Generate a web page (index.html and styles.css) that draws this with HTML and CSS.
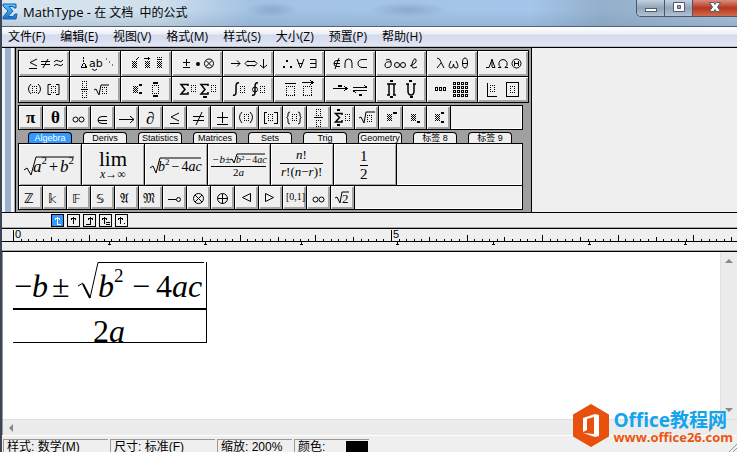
FILE: index.html
```html
<!DOCTYPE html>
<html lang="zh-CN">
<head>
<meta charset="utf-8">
<title>MathType</title>
<link rel="stylesheet" href="styles.css">
</head>
<body>
<svg class="defs" width="0" height="0" aria-hidden="true">
  <defs>
    <pattern id="check" width="2" height="2" patternUnits="userSpaceOnUse"><path d="M0 0h1v1h-1zM1 1h1v1h-1z" fill="#000"/></pattern>
    <g id="box"><path d="M0 .5h7M0 8.500h7M.5 2v6M6.500 2v6" stroke="#000" stroke-dasharray="1 1" fill="none"/></g>
    <g id="wide-box"><path d="M0 .5h9M0 9.500h9M.5 2v7M8.500 2v7" stroke="#000" stroke-dasharray="1 1" fill="none"/></g>
    <g id="mini"><path d="M0 .5h5M0 6.500h5M.5 2v4M4.500 2v4" stroke="#000" stroke-dasharray="1 1" fill="none"/></g>
    <rect id="fill" width="5" height="7" fill="url(#check)"/>
    <pattern id="ticks" x="13" width="378" height="12" patternUnits="userSpaceOnUse">
      <path fill="none" stroke="#000" d="M8.500 10v2M15.500 10v2M23.500 10v2M30.500 10v2M38.500 8v4M45.500 10v2M53.500 10v2M60.500 10v2M68.500 10v2M76.500 6v6M83.500 10v2M91.500 10v2M98.500 10v2M106.500 10v2M113.500 8v4M121.500 10v2M129.500 10v2M136.500 10v2M144.500 10v2M151.500 6v6M159.500 10v2M166.500 10v2M174.500 10v2M181.500 10v2M189.500 8v4M197.500 10v2M204.500 10v2M212.500 10v2M219.500 10v2M227.500 6v6M234.500 10v2M242.500 10v2M249.500 10v2M257.500 10v2M265.500 8v4M272.500 10v2M280.500 10v2M287.500 10v2M295.500 10v2M302.500 6v6M310.500 10v2M318.500 10v2M325.500 10v2M333.500 10v2M340.500 8v4M348.500 10v2M355.500 10v2M363.500 10v2M370.500 10v2M.5 1v11"/>
    </pattern>
    <pattern id="stops" x="108" width="96" height="4" patternUnits="userSpaceOnUse"><path d="M1 0h1v2h1v1h-3v-1h1z"/></pattern>
    <linearGradient id="sigma" x2="0" y2="1"><stop stop-color="#5cc4fa"/><stop offset="1" stop-color="#1573d2"/></linearGradient>
  </defs>
</svg>

<header class="titlebar">
  <svg class="app-icon" width="16" height="17" viewBox="0 0 16 17"><path d="M1 1h13v4h-2l-1-1.500H7l4 4.500-5 5.500h5l2-2.500h2l-1 5H1v-2l5-6-5-5z"/></svg>
  <h1 class="title"><span class="latin">MathType -</span> 在 文档&nbsp; 中的公式</h1>
  <div class="window-buttons">
    <button aria-label="最小化"><svg width="12" height="14"><rect x=".5" y="8.500" width="11" height="3"/></svg></button>
    <button aria-label="最大化"><svg width="12" height="14"><path d="M.5 2.500h11v9H.5zM4.500 5.500h3v3h-3z" fill-rule="evenodd"/></svg></button>
    <button class="close" aria-label="关闭"><svg width="12" height="14"><path d="M.5 2.500h4l1.500 2 1.500-2h4l-3 4.500 3 4.500h-4L6 9.500l-1.500 2h-4l3-4.500z"/></svg></button>
  </div>
</header>

<nav class="menubar">
  <button>文件(F)</button><button>编辑(E)</button><button>视图(V)</button><button>格式(M)</button><button>样式(S)</button><button>大小(Z)</button><button>预置(P)</button><button>帮助(H)</button>
</nav>

<section class="tools">
  <div class="grip"></div>
  <div class="palette">
    <div class="templates">
      <button><svg viewBox="0 0 50 25"><path d="M18 8l-7 3.500 7 3.500M10 17.500h8M22 10.500h9M22 13.500h9M29 8l-5 9M35 11q2-3 4.500-1t4.500-1M35 15q2-3 4.500-1t4.500-1"/></svg></button>
      <button><svg viewBox="0 0 50 25"><path class="crisp" d="M13.500 6v2M13.500 9v2M13.500 12l-2 4.500h5l-2-4.500"/><text x="19" y="16" class="sans small">ab</text><path d="M22 18q3 3 5 0M36 8h1M39 11h1M42 14h1"/></svg></button>
      <button><svg viewBox="0 0 50 25"><use href="#fill" x="11" y="10"/><use href="#fill" x="24" y="10"/><use href="#fill" x="36" y="10"/><path class="crisp" d="M15 9l3-3M23 7.500h6M27 6v3M36 6.500h1M38 6.500h1M40 6.500h1M36 8.500h5"/></svg></button>
      <button><svg viewBox="0 0 50 25"><path class="crisp" d="M14.500 8v7M11 11.500h7M11 16.500h7"/><circle class="solid" cx="26" cy="13" r="2"/><circle cx="37" cy="12.500" r="4.500"/><path d="M34 9.500l6 6M40 9.500l-6 6"/></svg></button>
      <button><svg viewBox="0 0 50 25"><path d="M8 12.500h9M14 9.500l3 3-3 3M25 9.500l-3 3 3 3M31 9.500l3 3-3 3M24 10.500h8M24 14.500h8M40.500 8v9M37 14l3.500 3 3.500-3"/></svg></button>
      <button><svg viewBox="0 0 50 25"><path class="solid" d="M9 15h2v2H9zM16 15h2v2h-2zM12 9h2v2h-2z"/><path d="M23 8l3.500 9L30 8M24 12.500h5M36 8.500h6v8h-6M36 12.500h6"/></svg></button>
      <button><svg viewBox="0 0 50 25"><path d="M15 9.500h-3q-3 0-3 3t3 3h3M9 12.500h6M14 7l-4 11M20 17v-5q0-4 3.500-4t3.500 4v5M42 8.500h-4q-5 0-5 4t5 4h4"/></svg></button>
      <button><svg viewBox="0 0 50 25"><path d="M10 9q4-2 5 2t-1 5q-5 2-5-2t6-3"/><circle cx="21" cy="14" r="2.500"/><circle cx="27" cy="14" r="2.500"/><path d="M34 15q7-3 6-6t-3 1-1 6 5 0"/></svg></button>
      <button><svg viewBox="0 0 50 25"><path d="M10 7q3 0 4 4l3 6M14 12l-4 5"/><path d="M24 10q-4 7 0 7 2.500 0 2.500-4 0 4 2.500 4 4 0 0-7"/><path d="M35.500 12q0-5 2.500-5t2.500 5-2.500 5-2.500-5zM35.500 12.500h5"/></svg></button>
      <button><svg viewBox="0 0 50 25"><path d="M8 16.500h3l3-8 3 8h-3M14 8v8M20 16.500h3q-3-2-2-5 1-3 4-3t4 3q1 3-2 5h3"/><circle cx="38.500" cy="12.500" r="4.500"/><path d="M36.500 10v5M40.500 10v5M37 12.500h3"/></svg></button>
      <button><svg viewBox="0 0 50 25"><path d="M12 7q-5 5 0 10M19 7q5 5 0 10M32 7.500h-3v10h3M37 7.500h3v10h-3"/><use href="#mini" x="13" y="9"/><use href="#mini" x="32" y="9"/></svg></button>
      <button><svg viewBox="0 0 50 25"><path class="crisp" d="M11 12.500h7"/><use href="#mini" x="12" y="4"/><use href="#mini" x="12" y="14"/><path d="M24 13l2-1 3 6 2-10h8"/><use href="#mini" x="32" y="10"/></svg></button>
      <button><svg viewBox="0 0 50 25"><use href="#fill" x="12" y="9"/><path class="solid" d="M18 7h3v2h-3zM18 15h3v2h-3zM32 5h5v2h-5zM32 18h5v2h-5z"/><use href="#box" x="31" y="8"/></svg></button>
      <button><svg viewBox="0 0 50 25"><path class="medium" d="M16 9V7.500H9l4 5L9 17h7v-2M36 9V7.500h-7l4 5-4 4.500h7v-2"/><use href="#mini" x="19" y="8"/><use href="#mini" x="39" y="8"/><path class="solid" d="M31 19h4v2h-4z"/></svg></button>
      <button><svg viewBox="0 0 50 25"><path class="medium" d="M16 6q-3-1-3 4v5q0 4-3 3M35 6q-3-1-3 4v5q0 4-3 3"/><circle cx="32" cy="12.500" r="2.500"/><use href="#mini" x="17" y="9"/><use href="#mini" x="37" y="9"/></svg></button>
      <button><svg viewBox="0 0 50 25"><path class="crisp" d="M11 6.500h11M28 5.500h11M36 3l3 2.500-3 2.500"/><use href="#wide-box" x="12" y="9"/><use href="#wide-box" x="29" y="9"/></svg></button>
      <button><svg viewBox="0 0 50 25"><path class="crisp" d="M8 11.500h14M19 9l3 2.500-3 2.500M28 10.500h14M39 8l3 2.500M42 13.500h-14M31 16l-3-2.500"/><path class="solid" d="M13 8h4v2h-4zM34 17h3v2h-3z"/></svg></button>
      <button><svg viewBox="0 0 50 25"><path class="medium" d="M11 7h9M13 7v11M18 7v11M11 18h3M17 18h3M32 7v7q0 4 3 4t3-4V7M30 7h3M37 7h3"/><path class="solid" d="M14 3h3v2h-3zM14 19h3v2h-3zM33 3h3v2h-3zM34 19h3v2h-3z"/></svg></button>
      <button><svg viewBox="0 0 50 25"><path class="crisp" d="M8.500 10.500h2v3h-2zM12.500 10.500h2v3h-2zM16.500 10.500h2v3h-2z"/><path class="grid-dots" d="M26 6.500h15M26 10.500h15M26 14.500h15M26 18.500h15"/><path class="grid-holes" d="M27 6.500h14M27 10.500h14M27 14.500h14M27 18.500h14"/></svg></button>
      <button><svg viewBox="0 0 50 25"><path class="crisp" d="M9.500 6v13H19M28.500 5.500h12v14h-12z"/><use href="#mini" x="12" y="8"/><use href="#mini" x="32" y="9"/></svg></button>
    </div>

    <div class="strip symbols">
      <button><svg viewBox="0 0 23 23"><text x="7" y="17" class="pi">π</text></svg></button>
      <button><svg viewBox="0 0 23 23"><text x="8" y="17" class="pi">θ</text></svg></button>
      <button><svg viewBox="0 0 23 23"><circle cx="8.500" cy="13.500" r="2.500"/><circle cx="14.500" cy="13.500" r="2.500"/></svg></button>
      <button><svg viewBox="0 0 23 23"><path d="M16 10.500h-5q-4 0-4 3.500t4 3.500h5M7 14.500h9"/></svg></button>
      <button><svg viewBox="0 0 23 23"><path d="M4 13.500h15M15 10l4 3.500-4 3.500"/></svg></button>
      <button><svg viewBox="0 0 23 23"><text x="7" y="18" class="pi">∂</text></svg></button>
      <button><svg viewBox="0 0 23 23"><path d="M16 7l-8 4 8 4M7 17.500h9"/></svg></button>
      <button><svg viewBox="0 0 23 23"><path d="M6 10.500h11M6 14.500h11M15 6l-6 13"/></svg></button>
      <button><svg viewBox="0 0 23 23"><path class="crisp" d="M11.500 6v11M6 11.500h11M6 18.500h11"/></svg></button>
      <button><svg viewBox="0 0 23 23"><path d="M7 6q-5 5 0 11M15 6q5 5 0 11"/><use href="#mini" x="9" y="8"/></svg></button>
      <button><svg viewBox="0 0 23 23"><path class="crisp" d="M8 6.500H5.500v11H8M15 6.500h3v11h-3"/><use href="#mini" x="9" y="8"/></svg></button>
      <button><svg viewBox="0 0 23 23"><path d="M7 6q-2 0-2 2v2l-1 1.500 1 1.500v3q0 2 2 2M15 6q2 0 2 2v2l1 1.500-1 1.500v3q0 2-2 2"/><use href="#mini" x="9" y="8"/></svg></button>
      <button><svg viewBox="0 0 23 23"><path class="crisp" d="M7 11.500h9"/><use href="#mini" x="9" y="3"/><use href="#mini" x="9" y="14"/></svg></button>
      <button><svg viewBox="0 0 23 23"><path class="medium" d="M11 9V7.500H4.500l4 4-4 4.500H11v-2"/><path class="solid" d="M6 3h3v2H6zM6 18h3v2H6z"/><use href="#mini" x="14" y="8"/></svg></button>
      <button><svg viewBox="0 0 23 23"><path d="M4 12l2-1 3 6 2-11h9"/><use href="#mini" x="12" y="9"/></svg></button>
      <button><svg viewBox="0 0 23 23"><use href="#fill" x="8" y="8"/><path class="solid" d="M14 6h4v2h-4z"/></svg></button>
      <button><svg viewBox="0 0 23 23"><use href="#fill" x="8" y="8"/><path class="solid" d="M14 15h3v2h-3z"/></svg></button>
      <button><svg viewBox="0 0 23 23"><use href="#fill" x="8" y="8"/><path class="solid" d="M14 6h3v2h-3zM14 15h3v2h-3z"/></svg></button>
      <span class="blank"></span>
    </div>

    <div class="tabs">
      <button class="active">Algebra</button><button>Derivs</button><button>Statistics</button><button>Matrices</button><button>Sets</button><button>Trig</button><button>Geometry</button><button>标签 8</button><button>标签 9</button>
    </div>

    <div class="strip formulas">
      <button><svg viewBox="0 0 62 41"><path d="M5 26l3-2 4 7 5-18h38"/><text class="math" x="14" y="28" font-size="17">a<tspan class="up" dy="-8" font-size="11">2</tspan><tspan class="up" dx="2" dy="8" font-size="16">+</tspan><tspan dx="2">b</tspan><tspan class="up" dy="-8" font-size="11">2</tspan></text></svg></button>
      <button><svg viewBox="0 0 62 41"><text class="math up" x="17" y="22" font-size="21">lim</text><text class="math" x="18" y="34" font-size="12">x<tspan class="up">→∞</tspan></text></svg></button>
      <button><svg viewBox="0 0 62 41"><path d="M5 24l3-2 3 7 4-15h41"/><text class="math" x="13" y="27" font-size="14">b<tspan class="up" dy="-6" font-size="9">2</tspan><tspan class="up" dx="2" dy="6">−</tspan><tspan class="up" dx="2">4</tspan>ac</text></svg></button>
      <button><svg viewBox="0 0 62 41"><path class="crisp" d="M3 22.500h55"/><path d="M22 16l2-1 2 4 3-9h28"/><text class="math" x="4" y="19" font-size="11">−b<tspan class="up">±</tspan></text><text class="math" x="28" y="19" font-size="10">b<tspan class="up" dy="-3" font-size="7">2</tspan><tspan class="up" dx="1" dy="3">−</tspan><tspan class="up" dx="1">4</tspan>ac</text><text class="math" x="25" y="32" font-size="11"><tspan class="up">2</tspan>a</text></svg></button>
      <button><svg viewBox="0 0 62 41"><path class="crisp" d="M9 19.500h43"/><text class="math" x="25" y="15" font-size="13">n<tspan class="up">!</tspan></text><text class="math" x="10" y="32" font-size="13">r<tspan class="up">!(</tspan>n<tspan class="up">−</tspan>r<tspan class="up">)!</tspan></text></svg></button>
      <button><svg viewBox="0 0 62 41"><path class="crisp" d="M26 21.500h8"/><text class="math up" x="26" y="17" font-size="15">1</text><text class="math up" x="26" y="35" font-size="15">2</text></svg></button>
      <span class="blank"></span>
    </div>

    <div class="strip alphabets">
      <button><svg viewBox="0 0 23 23"><text x="5" y="17" class="dbl">ℤ</text></svg></button>
      <button><svg viewBox="0 0 23 23"><text x="5" y="17" class="dbl">𝕜</text></svg></button>
      <button><svg viewBox="0 0 23 23"><text x="5" y="17" class="dbl">𝔽</text></svg></button>
      <button><svg viewBox="0 0 23 23"><text x="5" y="17" class="dbl">𝕊</text></svg></button>
      <button><svg viewBox="0 0 23 23"><text x="5" y="17" class="dbl">𝔄</text></svg></button>
      <button><svg viewBox="0 0 23 23"><text x="4" y="17" class="dbl">𝔐</text></svg></button>
      <button><svg viewBox="0 0 23 23"><path class="crisp" d="M5 13.500h8"/><circle cx="15.500" cy="13.500" r="2"/></svg></button>
      <button><svg viewBox="0 0 23 23"><circle cx="11.500" cy="12.500" r="5"/><path d="M8 9l7 7M15 9l-7 7"/></svg></button>
      <button><svg viewBox="0 0 23 23"><circle cx="11.500" cy="12.500" r="5"/><path class="crisp" d="M11.500 8v10M7 12.500h10"/></svg></button>
      <button><svg viewBox="0 0 23 23"><path d="M15.500 7.500v8l-8-4z"/></svg></button>
      <button><svg viewBox="0 0 23 23"><path d="M6.500 7.500v8l8-4z"/></svg></button>
      <button><svg viewBox="0 0 23 23"><text x="3" y="14" class="serif">[0,1]</text></svg></button>
      <button><svg viewBox="0 0 23 23"><circle cx="8.500" cy="13.500" r="2.500"/><circle cx="14.500" cy="13.500" r="2.500"/></svg></button>
      <button><svg viewBox="0 0 23 23"><path d="M4 12l2-1 3 6 2-11h7"/><text x="11" y="17" class="serif two">2</text></svg></button>
      <span class="blank"></span>
    </div>
  </div>
</section>

<div class="tabstops">
  <button class="active" aria-label="左对齐"><svg viewBox="0 0 11 11"><path d="M5.500 2v7H9M3 4.500l2.500-2L8 4.500"/></svg></button>
  <button aria-label="居中"><svg viewBox="0 0 11 11"><path d="M5.500 2v7M3 4.500l2.500-2L8 4.500"/></svg></button>
  <button aria-label="右对齐"><svg viewBox="0 0 11 11"><path d="M6.500 2v7H2M4 4.500l2.500-2L9 4.500"/></svg></button>
  <button aria-label="关系符对齐"><svg viewBox="0 0 11 11"><path d="M4.500 2v7M2 4.500l2.500-2L7 4.500M6 7.500h4M6 9.500h4"/></svg></button>
  <button aria-label="小数点对齐"><svg viewBox="0 0 11 11"><path d="M4.500 2v7M2 4.500l2.500-2L7 4.500M8 8.500h1"/></svg></button>
</div>

<div class="ruler">
  <svg><rect x="13" width="100%" height="12" fill="url(#ticks)"/><rect y="12" width="100%" height="1"/><g transform="translate(0 13)"><rect x="107" width="100%" height="3" fill="url(#stops)"/></g><text x="15" y="9">0</text><text x="393" y="9">5</text></svg>
</div>

<main class="editor">
  <div class="page">
    <svg class="equation" width="194" height="81" viewBox="0 0 194 81">
      <path class="crisp" d="M193.500 0v46M193.500 48v33M0 80.500h194M0 47h194"/><path class="crisp" d="M0 46.500h194"/>
      <path d="M65 24l5-3"/><path d="M70 22l7 14" stroke-width="2"/><path d="M77 36l8-35.500h106"/>
      <text class="math" x="1" y="35" font-size="32"><tspan class="up">−</tspan>b<tspan class="up" dx="4">±</tspan></text>
      <text class="math" x="85" y="35" font-size="32">b<tspan class="up" dy="-15" font-size="19">2</tspan></text>
      <text class="math" x="119" y="35" font-size="32"><tspan class="up">−</tspan><tspan class="up" dx="6">4</tspan>ac</text>
      <text class="math" x="80" y="80" font-size="32"><tspan class="up">2</tspan>a</text>
    </svg>
  </div>
  <div class="vscroll"><i class="arrow up-arrow"></i><i class="arrow down-arrow"></i></div>
  <div class="hscroll"><i class="arrow left-arrow"></i><i class="arrow right-arrow"></i></div>
</main>

<footer class="status">
  <span class="wide">样式: 数学(M)</span><span class="wide">尺寸: 标准(F)</span><span class="zoom">缩放: 200%</span><span class="colour">颜色: <i></i></span>
  <svg class="resize" width="10" height="14"><path d="M1 14L10 5M5 14l5-5"/></svg>
</footer>

<aside class="brand">
  <svg width="36" height="43" viewBox="0 0 36 43"><path d="M18 1l17 10v21L18 42 1 32V11z" stroke-width="2" stroke-linejoin="round"/><path d="M10 14l12-4 4 1v21l-4 1-12-4 11 1V13l-7 2v11l-4 2z"/></svg>
  <div><strong>Office教程网</strong><a href="http://www.office26.com">www.office26.com</a></div>
</aside>
</body>
</html>
```
FILE: styles.css
```css
* { box-sizing: border-box; }
body {
  margin: 0;
  height: 100vh;
  display: flex;
  flex-direction: column;
  overflow: hidden;
  position: relative;
  background: #efefef;
  border-left: 2px solid #3b4554;
  font: 12px/16px "Open Sans", "Noto Sans CJK SC", sans-serif;
  color: #000;
}
button {
  margin: 0;
  padding: 0;
  border: 0;
  background: none;
  font: inherit;
  color: inherit;
}
svg { display: block; flex: none; }
svg path, svg circle { fill: none; stroke: #000; }
.defs { position: absolute; }
.defs path[fill="#000"], #stops path { fill: #000; stroke: none; }

/* Title bar */
.titlebar {
  flex: none;
  display: flex;
  align-items: center;
  height: 27px;
  margin-left: -2px;
  border-bottom: 1px solid #54606f;
  background:
    radial-gradient(ellipse 26px 8px at 272px 10px, #8ba9ca, transparent),
    radial-gradient(ellipse 40px 8px at 408px 10px, #8ba9ca, transparent),
    linear-gradient(#ffffff00 40%, #6a8aaa44),
    linear-gradient(90deg, #d9e5ef, #cfdfec 160px, #a3c2e3 250px, #a5c6ea 530px, #93afcb 600px, #a9c0d7);
}
.app-icon { margin: 0 5px 3px 2px; }
.app-icon path { fill: url(#sigma); stroke: #1460ae; }
.title { flex: 1; margin: 0 0 2px; font-size: 12px; font-weight: 400; white-space: pre; }
.latin { font-size: 13px; }
.window-buttons {
  display: flex;
  align-self: flex-start;
  height: 17px;
  border: solid #4c5666;
  border-width: 0 0 1px 1px;
  border-radius: 0 0 0 5px;
  overflow: hidden;
}
.window-buttons button {
  display: flex;
  justify-content: center;
  width: 28px;
  border-right: 1px solid #4c5666;
  background: linear-gradient(#c4d1df, #91a4b9 50%, #b0c2d4);
}
.window-buttons .close { width: 44px; border: 0; background: linear-gradient(#d98f80, #b8361e 50%, #d26a4b); }
.window-buttons path, .window-buttons rect { fill: #fff; stroke: #535c6c; }

/* Menus */
.menubar {
  flex: none;
  display: flex;
  gap: 15px;
  height: 20px;
  padding-left: 6px;
  border-bottom: 1px solid #b9bccb;
  background: linear-gradient(#fff, #eaeef8 7px, #d4daec 8px, #e1e5f4);
}

/* Template and symbol palettes */
.tools { flex: none; display: flex; border: solid #000; border-width: 1px 0; }
.grip { width: 13px; padding: 0 3px; border-right: 1px solid #aaa; background: linear-gradient(#99b1cf, #99b1cf) content-box, #f4f4f4; }
.palette { padding: 2px; width: 517px; border: solid #000; border-width: 0 1px; background: #a0a0a0; }
.templates {
  display: grid;
  grid-template-columns: repeat(10, 50px);
  grid-auto-rows: 25px;
  gap: 1px;
  padding: 1px;
  background: #000;
}
.palette .templates button, .strip button {
  background: #efefef;
  box-shadow: inset 1px 1px #fff, inset -2px -2px #a6a6a6;
}
.palette button svg { width: 100%; height: 100%; }
.palette .solid { fill: #000; stroke: none; }
.palette .medium { stroke-width: 1.5; }
.crisp { shape-rendering: crispEdges; }
.palette path.grid-dots { stroke-width: 3; stroke-dasharray: 3 1; }
.palette path.grid-holes { stroke: #fff; stroke-dasharray: 1 3; }
.strip { display: flex; gap: 1px; width: 505px; padding: 1px; background: #000; }
.symbols { margin-top: 2px; }
.strip button { width: 23px; height: 23px; }
.strip.formulas button { width: 62px; height: 41px; box-shadow: inset 1px 1px #fff, inset -1px -1px #a6a6a6; }
.alphabets { padding-top: 0; }
.blank { flex: 1; background: #efefef; box-shadow: inset -1px -1px #fff; }
.sans { font: 13px "DejaVu Sans", sans-serif; }
.small { font-size: 11px; }
.pi { font: bold 17px "Liberation Serif", serif; }
.dbl { font: 13px "DejaVu Sans", serif; }
.serif { font: 10px "Liberation Serif", serif; }
.two { font-size: 13px; }
.math { font-family: "Liberation Serif", serif; font-style: italic; }
.up { font-style: normal; }
.tabs { display: flex; gap: 11px; height: 13px; padding: 2px 0 0 10px; }
.tabs button {
  width: 44px;
  border: 1px solid #000;
  border-bottom: 0;
  border-radius: 4px 4px 0 0;
  background: #efefef;
  font: 9px/11px "Liberation Sans", "Noto Sans CJK SC", sans-serif;
  white-space: nowrap;
}
.tabs .active { background: #3399ff; color: #fff; }

/* Tab stops and ruler */
.tabstops { flex: none; display: flex; gap: 3px; height: 16px; padding: 1px 0 0 49px; border-bottom: 1px solid #000; box-shadow: inset 0 -1px #aaa; }
.tabstops button { width: 13px; height: 13px; border: 1px solid #000; }
.tabstops path { shape-rendering: crispEdges; }
.tabstops .active { background: #3399ff; }
.tabstops .active path { stroke: #fff; }
.ruler { flex: none; height: 23px; margin-left: -2px; border-left: 2px solid #3b4554; border-bottom: 1px solid #000; box-shadow: inset 0 -1px #aaa; }
.ruler svg { width: calc(100% + 2px); height: 20px; margin-left: -2px; font: 11px "Liberation Sans", sans-serif; }

/* Document */
.editor {
  flex: 1;
  min-height: 0;
  display: grid;
  grid-template: minmax(0, 1fr) 16px / minmax(0, 1fr) 17px;
  border-left: 1px solid #999;
}
.page { padding: 10px; overflow: hidden; background: #fff; }
.equation { overflow: visible; }
.vscroll, .hscroll { display: flex; justify-content: space-between; align-items: center; background: #ececec; }
.vscroll { flex-direction: column; padding: 7px 0; border-left: 1px solid #e0e0e0; }
.hscroll { grid-column: 1 / -1; padding: 0 24px 0 6px; border-top: 1px solid #e0e0e0; }
.arrow { border: 4px solid transparent; }
.up-arrow { border-top: 0; border-bottom-color: #888; }
.down-arrow { border-bottom: 0; border-top-color: #888; }
.left-arrow { border-left: 0; border-right-color: #888; }
.right-arrow { border-right: 0; border-left-color: #888; }

/* Status bar */
.status {
  flex: none;
  display: flex;
  gap: 2px;
  height: 17px;
  padding: 3px 0 0 1px;
  border-top: 1px solid #fff;
  font: 12px/14px "Liberation Sans", "Noto Sans CJK SC", sans-serif;
}
.status span { border: solid #999; border-width: 1px 0 0 1px; padding-left: 3px; white-space: nowrap; }
.wide { width: 105px; }
.zoom { width: 75px; }
.colour { display: flex; justify-content: space-between; width: 75px; }
.colour i { width: 22px; margin: 1px 1px 0 0; background: #000; }
.resize { margin-left: auto; }
.resize path { stroke: #999; }

/* Site badge over the window corner */
.brand { position: absolute; right: 4px; bottom: 5px; display: flex; gap: 4px; }
.brand path:first-child { fill: #e8500e; stroke: #e8500e; }
.brand path:last-child { fill: #fff; stroke: none; }
.brand div { display: flex; flex-direction: column; padding-top: 6px; }
.brand strong { font: bold 19px/20px "Open Sans", "Noto Sans CJK SC", sans-serif; color: #12a4ec; }
.brand a { font: bold 13px/14px "Open Sans", sans-serif; color: #ea560e; text-decoration: none; }
```
